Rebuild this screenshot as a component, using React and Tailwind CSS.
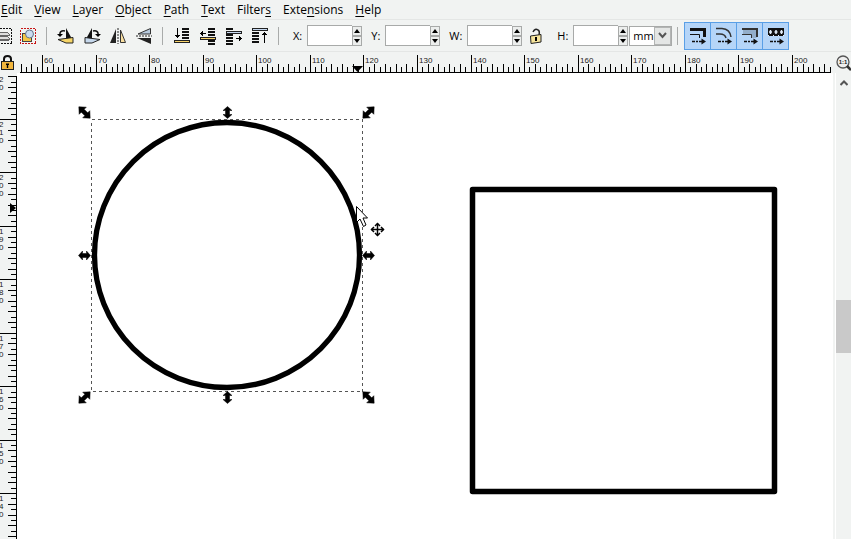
import React, { useEffect, useState } from "react";

const STEP = 750 / 140;

const MENUS = [
  ["", "E", "dit"],
  ["", "V", "iew"],
  ["", "L", "ayer"],
  ["", "O", "bject"],
  ["", "P", "ath"],
  ["", "T", "ext"],
  ["Filter", "s", ""],
  ["Exte", "n", "sions"],
  ["", "H", "elp"],
];

function useWindowSize() {
  const read = () => ({ width: window.innerWidth, height: window.innerHeight });
  const [size, setSize] = useState(read);
  useEffect(() => {
    const update = () => setSize(read());
    window.addEventListener("resize", update);
    return () => window.removeEventListener("resize", update);
  }, []);
  return size;
}

function Icon({ label, children, className = "w-[26px]" }) {
  return (
    <button type="button" aria-label={label} className={`flex h-7 shrink-0 items-center justify-center ${className}`}>
      <svg width="18" height="18" viewBox="0 0 18 18" shapeRendering="crispEdges">
        {children}
      </svg>
    </button>
  );
}

function Divider({ className = "ml-[5px] mr-[6px]" }) {
  return <div className={`h-[18px] w-px shrink-0 bg-[#a9abaa] ${className}`} />;
}

function Bars({ ys, x = 9, w = 7 }) {
  return ys.map((y) => <rect key={y} x={x} y={y} width={w} height="2" fill="#111" />);
}

function Field({ id, label, className = "" }) {
  return (
    <div className={`flex shrink-0 items-center ${className}`}>
      <label htmlFor={id} className="pr-[5px] text-[11px] leading-4">
        {label}
      </label>
      <input id={id} className="h-[21px] w-[45px] border border-r-0 border-[#a8aaa9] bg-white px-1 text-[11px] outline-none" />
      <div className="flex h-5 w-[10px] flex-col">
        <button type="button" aria-label={`Increase ${label}`} className="flex h-[10px] items-center justify-center border border-[#a8aaa9] bg-[#eceeed]">
          <svg width="6" height="4"><path d="M0 4L3 0L6 4Z" /></svg>
        </button>
        <button type="button" aria-label={`Decrease ${label}`} className="flex h-[10px] items-center justify-center border border-[#a8aaa9] bg-[#eceeed]">
          <svg width="6" height="4"><path d="M0 0L3 4L6 0Z" /></svg>
        </button>
      </div>
    </div>
  );
}

function Toggle({ label, children }) {
  return (
    <button type="button" aria-pressed="true" aria-label={label} className="-mr-px flex h-7 w-[27px] shrink-0 items-center justify-center border border-[#5a9fe6] bg-[#b5d5f8]">
      <svg width="18" height="18" viewBox="0 0 18 18">
        {children}
        <path d="M3 14.500H6M7 14.500H9M10 14.500H13" stroke="#111" strokeWidth="1.600" />
        <path d="M12.500 11.500L17 14.500L12.500 17.500Z" fill="#111" />
      </svg>
    </button>
  );
}

function HorizontalRuler({ length }) {
  const count = Math.ceil((length - 22) / STEP) + 1;
  const ticks = Array.from({ length: count + 4 }, (_, i) => i - 4);
  const labels = ticks.filter((k) => k >= 0 && k % 10 === 0 && 40 + k * STEP < length);
  return (
    <svg className="h-[21px] min-w-0 flex-1" role="img" aria-label="Horizontal ruler">
      <g shapeRendering="crispEdges">
        {ticks.map((k) => {
          const h = k % 10 === 0 ? 17 : k % 2 === 0 ? 8 : 5;
          return <rect key={k} x={Math.round(22 + k * STEP)} y={20 - h} width="1" height={h} />;
        })}
        <rect x="0" y="20" width="100%" height="1" />
      </g>
      <g fontFamily="Liberation Sans, Arial, sans-serif" fontSize="8" fill="#222">
        {labels.map((k) => (
          <text key={k} x={Math.round(22 + k * STEP) + 2} y="11">{60 + k}</text>
        ))}
      </g>
      <path d="M332 14H343L337.500 20Z" />
    </svg>
  );
}

function VerticalRuler({ length }) {
  const ticks = Array.from({ length: Math.ceil(length / 5.345) }, (_, i) => i - 8);
  const digits = [];
  for (let n = -1; 46 + n * 53.45 < length; n++) {
    String(210 - n * 10).split("").forEach((d, i) => {
      const y = Math.round(46 + n * 53.45) + 8 + i * 8;
      if (y > 8 && y < length) digits.push({ d, y });
    });
  }
  return (
    <svg className="h-full w-[17px] shrink-0 bg-[#f1f3f2]" role="img" aria-label="Vertical ruler">
      <g shapeRendering="crispEdges">
        {ticks.map((k) => {
          const w = k % 10 === 0 ? 16 : k % 2 === 0 ? 8 : 5;
          return <rect key={k} x={16 - w} y={Math.round(46 + k * 5.345)} width={w} height="1" />;
        })}
        <rect x="16" y="3" width="1" height="100%" />
      </g>
      <g fontFamily="Liberation Sans, Arial, sans-serif" fontSize="8" fill="#222">
        {digits.map(({ d, y }) => (
          <text key={y} x="-1" y={y}>{d}</text>
        ))}
      </g>
      <path d="M10 130L16 135L10 140Z" />
    </svg>
  );
}

function Handle({ x, y, angle }) {
  const diagonal = angle % 90 !== 0;
  const d = diagonal
    ? "M-8 0L-2.500 -5V-2H2.500V-5L8 0L2.500 5V2H-2.500V5Z"
    : "M-6 0L-2 -4.500V-2H2V-4.500L6 0L2 4.500V2H-2V4.500Z";
  return <path d={d} transform={`translate(${x} ${y}) rotate(${angle})`} stroke="#000" strokeWidth="0.500" />;
}

function Drawing() {
  return (
    <svg className="h-full min-w-0 flex-1 bg-white" role="img" aria-label="Canvas">
      <circle cx="210" cy="182" r="132.500" fill="none" stroke="#000" strokeWidth="5.300" />
      <rect x="455.500" y="116.500" width="302" height="302" fill="none" stroke="#000" strokeWidth="5.500" strokeLinejoin="round" />
      <rect x="74.500" y="46.500" width="271" height="272" fill="none" stroke="#555" strokeDasharray="3 3" shapeRendering="crispEdges" />
      <Handle x={67.5} y={39.5} angle={45} />
      <Handle x={210.5} y={39.5} angle={90} />
      <Handle x={351.5} y={39.5} angle={135} />
      <Handle x={67.5} y={182.5} angle={0} />
      <Handle x={351.5} y={182.5} angle={0} />
      <Handle x={67.5} y={324.5} angle={135} />
      <Handle x={210.5} y={324.5} angle={90} />
      <Handle x={351.5} y={324.5} angle={45} />
      <path d="M339.500 133.500V149.500L343 146L346.500 153.500L349 152L346 145H350.500Z" fill="#fff" stroke="#000" />
      <g fill="none" stroke="#000">
        <path d="M360.500 150.500V162.500M354.500 156.500H366.500" strokeWidth="1.500" />
        <path d="M358 153L360.500 150.500L363 153M358 160L360.500 162.500L363 160M357 154L354.500 156.500L357 159M364 154L366.500 156.500L364 159" strokeWidth="1.500" />
      </g>
    </svg>
  );
}

export default function App() {
  const { width, height } = useWindowSize();
  return (
    <div className="flex h-screen flex-col overflow-hidden bg-[#f1f3f2] font-['Open_Sans','Noto_Sans',sans-serif] text-black">
      <nav className="flex h-5 shrink-0 items-center gap-3 border-b border-[#e4e6e5] pl-px text-xs leading-5">
        {MENUS.map(([a, key, b]) => (
          <button key={a + key + b} type="button" className="shrink-0">
            {a}<span className="underline underline-offset-2">{key}</span>{b}
          </button>
        ))}
      </nav>

      <div className="flex h-8 shrink-0 items-center border-b border-[#e4e6e5]">
        <Icon label="Select all in layers" className="-ml-2 w-[23px]">
          <rect x="1.500" y="1.500" width="15" height="15" fill="none" stroke="#111" strokeDasharray="2 1" />
          <path d="M4 5H12L14 7V8H4ZM4 9H12L14 11V12H4ZM4 13H14" fill="#ddd" stroke="#666" />
        </Icon>
        <Icon label="Select all">
          <rect x="1.500" y="1.500" width="15" height="15" fill="none" stroke="#c81414" strokeDasharray="2 1" />
          <g shapeRendering="auto">
            <rect x="3.500" y="6.500" width="9" height="8" fill="#f5c644" stroke="#444" />
            <circle cx="10.500" cy="7" r="4" fill="#cbdcf0" stroke="#62738a" />
          </g>
        </Icon>
        <Divider />
        <Icon label="Rotate left">
          <g shapeRendering="auto">
            <path d="M9 1V12H15Z" fill="#111" />
            <path d="M1 12.500L16 10.500V16H9Z" fill="#f6d568" stroke="#222" />
            <path d="M3 8V6Q4 3 8 4" fill="none" stroke="#111" strokeWidth="1.500" />
            <path d="M0 7H6L3 10Z" />
          </g>
        </Icon>
        <Icon label="Rotate right">
          <g shapeRendering="auto">
            <path d="M9 1V12H3Z" fill="#111" />
            <path d="M17 12.500L2 10.500V16H9Z" fill="#c6d8ec" stroke="#222" />
            <path d="M15 8V6Q14 3 10 4" fill="none" stroke="#111" strokeWidth="1.500" />
            <path d="M12 7H18L15 10Z" />
          </g>
        </Icon>
        <Icon label="Flip horizontal">
          <g shapeRendering="auto">
            <path d="M7 2V16H1Z" fill="#222" />
            <path d="M11.500 3V15.500H16.500Z" fill="#f9dfa0" stroke="#333" />
            <path d="M9 1V17" stroke="#222" strokeDasharray="2 1" />
          </g>
        </Icon>
        <Icon label="Flip vertical">
          <g shapeRendering="auto">
            <path d="M15.500 1.500V7H3Z" fill="#b8cadd" stroke="#333" />
            <path d="M2 11H16V17Z" fill="#222" />
            <path d="M1 9H17" stroke="#222" strokeDasharray="2 1" />
          </g>
        </Icon>
        <Divider />
        <Icon label="Lower to bottom">
          <Bars ys={[1, 4, 7, 10]} />
          <path d="M4 1H5V8H7V9H6V10H5V11H4V10H3V9H2V8H4Z" />
          <rect x="1.500" y="13.500" width="15" height="2" fill="#f8d36a" stroke="#222" />
        </Icon>
        <Icon label="Lower">
          <Bars ys={[1, 4, 7, 13, 16]} />
          <path d="M1 6H2V5H3V4H4V6H7V7H4V9H3V8H2V7H1Z" />
          <rect x="1.500" y="10.500" width="15" height="2" fill="#f8d36a" stroke="#222" />
        </Icon>
        <Icon label="Raise">
          <Bars ys={[1, 7, 10, 13, 16]} x={1} />
          <path d="M17 11H16V10H15V9H14V11H11V12H14V14H15V13H16V12H17Z" />
          <rect x="1.500" y="4.500" width="15" height="2" fill="#c8d9f0" stroke="#222" />
        </Icon>
        <Icon label="Raise to top">
          <Bars ys={[5, 8, 11, 14]} x={1} />
          <path d="M13 16V8H11V7H12V6H13V5H14V6H15V7H16V8H14V16Z" />
          <rect x="1.500" y="1.500" width="15" height="2" fill="#c8d9f0" stroke="#222" />
        </Icon>
        <Divider className="ml-[5px] mr-[14px]" />

        <div className="flex shrink-0 items-center gap-[9px]">
          <Field id="x" label="X:" />
          <Field id="y" label="Y:" />
          <Field id="w" label="W:" />
        </div>
        <button type="button" aria-label="Lock width and height" className="flex h-7 w-7 shrink-0 items-center justify-center">
          <svg width="14" height="16" viewBox="0 0 14 16">
            <path d="M4 4Q6 0 9 2Q11 3 10 7" fill="none" stroke="#222" strokeWidth="1.500" />
            <path d="M1.500 8L12 6.500V14L2 15.500Z" fill="#f6e49b" stroke="#222" />
            <path d="M6 9H8V13H6Z" />
          </svg>
        </button>
        <Field id="h" label="H:" className="ml-[7px]" />
        <div className="relative ml-px h-5 w-[43px] shrink-0 border border-[#a8aaa9] bg-white">
          <select aria-label="Units" className="block h-full w-full appearance-none pl-[3px] text-[11px] leading-4 outline-none">
            <option>mm</option>
          </select>
          <span className="pointer-events-none absolute inset-y-0 right-0 flex w-[17px] items-center justify-center border border-[#b3b5b4] bg-[#e4e6e5]">
            <svg width="9" height="7" fill="none" stroke="#555" strokeWidth="2"><path d="M1 1L4.500 5L8 1" /></svg>
          </span>
        </div>
        <Divider />
        <Toggle label="Scale stroke width">
          <path d="M1 2.500H15.500V10" fill="none" stroke="#111" strokeWidth="3" />
          <path d="M1 7.500H10.500V11" fill="none" stroke="#111" />
        </Toggle>
        <Toggle label="Scale rounded corners">
          <path d="M1 1.500H7Q15 2 16 10M1 7H5Q10 7 11 11" fill="none" stroke="#333" strokeWidth="1.500" />
        </Toggle>
        <Toggle label="Move gradients">
          <path d="M2 4.500H13V11" fill="none" stroke="#93aecb" strokeWidth="5" />
          <path d="M1 2H16V10" fill="none" stroke="#333" strokeWidth="2" />
          <path d="M1 7.500H10.500V11" fill="none" stroke="#333" />
        </Toggle>
        <Toggle label="Move patterns">
          <path d="M1 1H17V9H1Z" fill="#111" />
          <path d="M3.500 3V7M2 5H5M9 3V7M7.500 5H10.500M14.500 3V7M13 5H16" fill="none" stroke="#e4eefb" strokeWidth="1.500" />
          <path d="M1 8.500H2M6 8.500H7M11 8.500H12M16 8.500H17" stroke="#e4eefb" />
        </Toggle>
      </div>

      <div className="flex h-[21px] shrink-0">
        <button type="button" aria-label="Lock guides" className="flex w-5 shrink-0 items-center pl-px">
          <svg width="13" height="15" viewBox="0 0 13 15">
            <path d="M3 7V4Q3 1 6.500 1Q10 1 10 4V7" fill="none" stroke="#111" strokeWidth="2" />
            <rect x="0.500" y="6.500" width="12" height="8" fill="#f2b63c" stroke="#222" />
            <path d="M5 8.500H8V10H7.200V13H5.800V10H5Z" />
          </svg>
        </button>
        <HorizontalRuler length={width - 40} />
        <button type="button" aria-label="Zoom to actual size" className="w-5 shrink-0 overflow-hidden pl-[5px]">
          <svg width="15" height="19" viewBox="0 0 15 19">
            <circle cx="7" cy="9" r="6" fill="#eee" stroke="#555" strokeWidth="1.300" />
            <path d="M11 13L15 17" stroke="#333" strokeWidth="2.500" />
            <text x="7" y="11" textAnchor="middle" fontFamily="Liberation Sans, sans-serif" fontSize="6" fontWeight="700" fill="#222">1:1</text>
          </svg>
        </button>
      </div>

      <main className="flex min-h-0 flex-1">
        <VerticalRuler length={height - 73} />
        <Drawing />
        <div className="w-[2px] shrink-0" />
        <div className="w-px shrink-0 bg-white" />
        <div className="flex w-[15px] shrink-0 flex-col">
          <button type="button" aria-label="Scroll up" className="flex h-5 items-center justify-center">
            <svg width="8" height="6" fill="none" stroke="#555" strokeWidth="2"><path d="M0.500 5L4 1.500L7.500 5" /></svg>
          </button>
          <div className="grow-[207]" />
          <div className="h-[53px] bg-[#c9c9c9]" />
          <div className="grow-[186]" />
        </div>
      </main>
    </div>
  );
}
